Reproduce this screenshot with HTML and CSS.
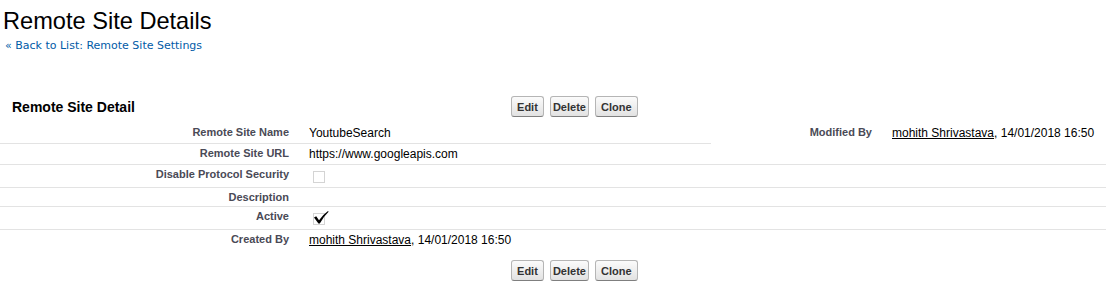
FILE: index.html
```html
<!DOCTYPE html>
<html lang="en">
<head>
  <meta charset="UTF-8">
  <title>Remote Site Details</title>
  <link rel="stylesheet" href="styles.css">
</head>
<body>

  <div class="page-title">
    <h1>Remote Site Details</h1>
    <div class="breadcrumb">« <a href="#">Back to List: Remote Site Settings</a></div>
  </div>

  <div class="pb">
    <div class="pb-header">
      <h2 class="pb-title">Remote Site Detail</h2>
      <div class="pb-buttons">
        <input type="button" class="btn" value=" Edit ">
        <input type="button" class="btn" value="Delete">
        <input type="button" class="btn" value=" Clone ">
      </div>
    </div>

    <table class="detail-list">
      <colgroup>
        <col class="col-label">
        <col class="col-data">
        <col class="col-label2">
        <col class="col-data2">
      </colgroup>
      <tr>
        <td class="label-col">Remote Site Name</td>
        <td class="data-col">YoutubeSearch</td>
        <td class="label-col" rowspan="2">Modified By</td>
        <td class="data-col" rowspan="2"><a href="#">mohith Shrivastava</a>, 14/01/2018 16:50</td>
      </tr>
      <tr>
        <td class="label-col">Remote Site URL</td>
        <td class="data-col">https://www.googleapis.com</td>
      </tr>
      <tr>
        <td class="label-col">Disable Protocol Security</td>
        <td class="data-col" colspan="3">
          <svg class="checkbox" width="20" height="17" viewBox="0 0 20 17">
            <rect x="4.5" y="3.5" width="11" height="11" fill="none" stroke="#a8a8a8" stroke-dasharray="1 1"/>
          </svg>
        </td>
      </tr>
      <tr>
        <td class="label-col">Description</td>
        <td class="data-col" colspan="3"></td>
      </tr>
      <tr>
        <td class="label-col">Active</td>
        <td class="data-col" colspan="3">
          <svg class="checkbox" width="20" height="17" viewBox="0 0 20 17">
            <rect x="4.5" y="3.5" width="11" height="11" fill="none" stroke="#a8a8a8" stroke-dasharray="1 1"/>
            <path d="M5 7.5 L7.2 6.3 L10 10.2 Q13.5 5 19 1 L19.6 1.8 Q14.6 6.5 10.8 13.6 L9.4 13.6 Z" fill="#000"/>
          </svg>
        </td>
      </tr>
      <tr class="last">
        <td class="label-col">Created By</td>
        <td class="data-col" colspan="3"><a href="#">mohith Shrivastava</a>, 14/01/2018 16:50</td>
      </tr>
    </table>

    <div class="pb-bottom">
      <div class="pb-buttons">
        <input type="button" class="btn" value=" Edit ">
        <input type="button" class="btn" value="Delete">
        <input type="button" class="btn" value=" Clone ">
      </div>
    </div>
  </div>

</body>
</html>
```

FILE: styles.css
```css
body {
  font-family: "Liberation Sans", Arial, sans-serif;
  font-size: 12px;
  margin: 0;
  color: #000;
  background: #fff;
}

/* Seitentitel */
.page-title h1 {
  font-size: 23.6px;
  font-weight: normal;
  line-height: 28px;
  margin: 7px 0 0 3px;
}

.breadcrumb {
  font-family: "DejaVu Sans", Verdana, sans-serif;
  font-size: 11px;
  line-height: 14px;
  margin: 4px 0 0 5px;
  color: #015ba7;
}

.breadcrumb a {
  color: #015ba7;
  text-decoration: none;
}

/* Page block */
.pb {
  margin-top: 39px;
}

.pb-header {
  display: flex;
  align-items: center;
  padding: 4px 0 6px;
}

.pb-title {
  width: 511px;
  box-sizing: border-box;
  padding-left: 12px;
  margin: 0;
  font-size: 14px;
  font-weight: bold;
}

.pb-buttons {
  display: flex;
  gap: 6px;
}

.pb-bottom {
  padding: 10px 0 4px 511px;
}

.btn {
  font-family: "Liberation Sans", Arial, sans-serif;
  font-size: 11px;
  font-weight: bold;
  color: #333;
  height: 21px;
  padding: 0 2px;
  margin: 0;
  border: 1px solid #b5b5b5;
  border-bottom-color: #7f7f7f;
  border-radius: 3px;
  background: linear-gradient(#fbfbfb, #e2e2e2);
  white-space: pre;
  cursor: pointer;
}

/* Detail-Tabelle */
.detail-list {
  width: 1106px;
  border-collapse: collapse;
  table-layout: fixed;
}

.col-label { width: 299px; }
.col-data { width: 412px; }
.col-label2 { width: 171px; }
.col-data2 { width: 224px; }

.detail-list td {
  vertical-align: top;
  border-bottom: 1px solid #e3e3e3;
}

.detail-list tr.last td {
  border-bottom: none;
}

.label-col {
  text-align: right;
  font-size: 11px;
  font-weight: bold;
  line-height: 13px;
  color: #4a4a56;
  padding: 3px 10px 2px 2px;
}

.data-col {
  font-size: 12px;
  line-height: 15px;
  padding: 3px 2px 2px 10px;
}

.data-col a {
  color: #000;
  text-decoration: underline;
}

.checkbox {
  display: block;
}
```
